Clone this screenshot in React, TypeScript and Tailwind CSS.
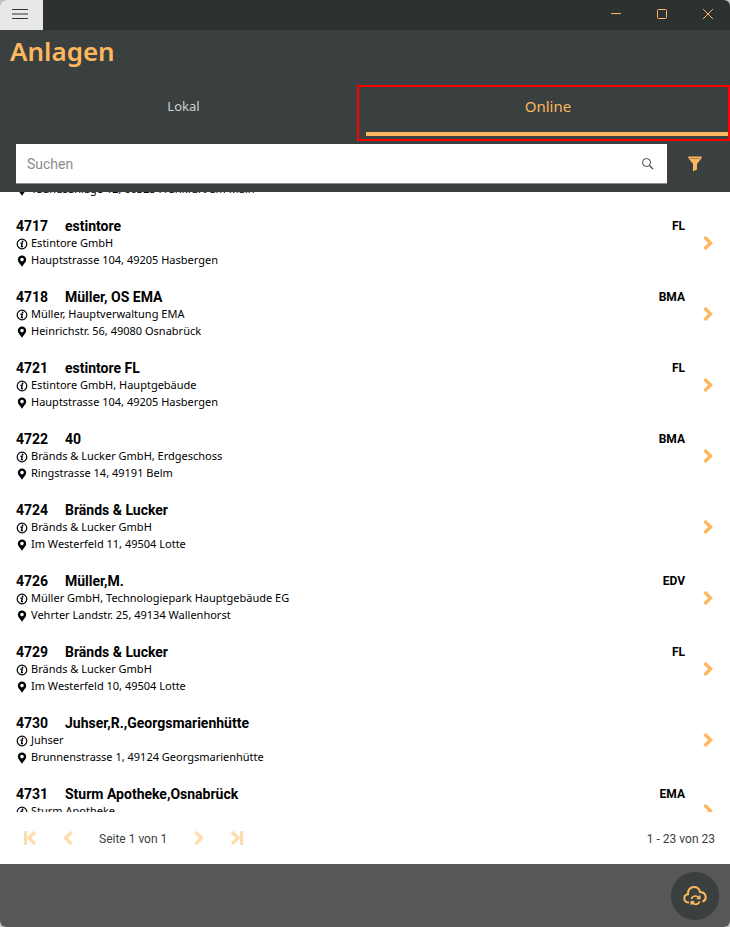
import React, { useLayoutEffect, useRef, useState } from 'react'

interface Site {
  id: string
  name: string
  info: string
  address: string
  type?: string
}

const sites: Site[] = [
  { id: '', name: '', info: '', address: 'Taunusanlage 12, 60325 Frankfurt am Main' },
  { id: '4717', name: 'estintore', info: 'Estintore GmbH', address: 'Hauptstrasse 104, 49205 Hasbergen', type: 'FL' },
  { id: '4718', name: 'Müller, OS EMA', info: 'Müller, Hauptverwaltung EMA', address: 'Heinrichstr. 56, 49080 Osnabrück', type: 'BMA' },
  { id: '4721', name: 'estintore FL', info: 'Estintore GmbH, Hauptgebäude', address: 'Hauptstrasse 104, 49205 Hasbergen', type: 'FL' },
  { id: '4722', name: '40', info: 'Bränds & Lucker GmbH, Erdgeschoss', address: 'Ringstrasse 14, 49191 Belm', type: 'BMA' },
  { id: '4724', name: 'Bränds & Lucker', info: 'Bränds & Lucker GmbH', address: 'Im Westerfeld 11, 49504 Lotte' },
  { id: '4726', name: 'Müller,M.', info: 'Müller GmbH, Technologiepark Hauptgebäude EG', address: 'Vehrter Landstr. 25, 49134 Wallenhorst', type: 'EDV' },
  { id: '4729', name: 'Bränds & Lucker', info: 'Bränds & Lucker GmbH', address: 'Im Westerfeld 10, 49504 Lotte', type: 'FL' },
  { id: '4730', name: 'Juhser,R.,Georgsmarienhütte', info: 'Juhser', address: 'Brunnenstrasse 1, 49124 Georgsmarienhütte' },
  { id: '4731', name: 'Sturm Apotheke,Osnabrück', info: 'Sturm Apotheke', address: '', type: 'EMA' },
]

const Chevron = ({ left = false }: { left?: boolean }) => (
  <svg width="16" height="16" viewBox="0 0 16 16" fill="none" stroke="currentColor" strokeWidth="3.4">
    <path d={left ? 'M11.500 2 5.500 8l6 6' : 'M4.500 2l6 6-6 6'} />
  </svg>
)

const ChevronEnd = ({ left = false }: { left?: boolean }) => (
  <svg width="16" height="16" viewBox="0 0 16 16" fill="none" stroke="currentColor" strokeWidth="3.4">
    <path d={left ? 'M13 2 7 8l6 6' : 'M3 2l6 6-6 6'} />
    <path d={left ? 'M3.500 1v14' : 'M12.500 1v14'} strokeWidth="3" />
  </svg>
)

const InfoIcon = () => (
  <svg width="12" height="12" viewBox="0 0 12 12" fill="none" stroke="currentColor" className="shrink-0">
    <circle cx="6" cy="6" r="4.8" strokeWidth="1.2" />
    <path d="M4.500 5.300h1.700L5.500 8.600h1.500" strokeWidth="1.4" />
    <circle cx="6.600" cy="3.500" r="0.9" fill="currentColor" stroke="none" />
  </svg>
)

const PinIcon = () => (
  <svg width="12" height="12" viewBox="0 0 12 12" fill="currentColor" className="shrink-0">
    <path
      fillRule="evenodd"
      d="M6 .5a4.200 4.200 0 0 0-4.200 4.200C1.800 7 4.300 8.800 6 11.700 7.700 8.800 10.200 7 10.200 4.700A4.200 4.200 0 0 0 6 .5Zm0 2.300a1.800 1.800 0 1 1 0 3.600 1.800 1.800 0 0 1 0-3.600Z"
    />
  </svg>
)

const TitleBar = () => (
  <div className="flex h-[30px] items-stretch justify-between bg-[#2c3131]">
    <button aria-label="Menü" className="flex w-[43px] items-center justify-center bg-[#e8e8e8] pr-1 pb-0.5">
      <svg width="16" height="12" viewBox="0 0 16 12" stroke="#333" strokeWidth="1">
        <path d="M0 1.500h16M0 6h16M0 10.500h16" />
      </svg>
    </button>
    <div className="flex text-[#fdb75e]">
      <button aria-label="Minimieren" className="flex w-[46px] items-center justify-center pb-0.5 pl-0.5">
        <svg width="10" height="10" viewBox="0 0 10 10" stroke="currentColor">
          <path d="M0 4.500h10" />
        </svg>
      </button>
      <button aria-label="Maximieren" className="flex w-[46px] items-center justify-center pb-0.5 pl-0.5">
        <svg width="10" height="10" viewBox="0 0 10 10" fill="none" stroke="currentColor">
          <rect x="0.5" y="0.5" width="9" height="9" rx="1" />
        </svg>
      </button>
      <button aria-label="Schließen" className="flex w-[46px] items-center justify-center pb-0.5 pl-0.5">
        <svg width="10" height="10" viewBox="0 0 10 10" stroke="currentColor">
          <path d="M0 0l10 10M10 0L0 10" />
        </svg>
      </button>
    </div>
  </div>
)

const SiteRow = ({ site }: { site: Site }) => (
  <li className="flex h-[71px] items-center pl-4 pr-3.5 text-black">
    <div className="min-w-0 flex-1">
      <div className="flex h-[19px] items-center justify-between font-['Roboto',sans-serif] font-bold">
        <h2 className="flex text-sm">
          <span className="w-[49px]">{site.id}</span>
          <span>{site.name}</span>
        </h2>
        <span className="mr-[15px] text-xs">{site.type}</span>
      </div>
      <p className="flex h-[17px] items-center gap-[3px] text-[11px]">
        <InfoIcon />
        {site.info}
      </p>
      <p className="flex h-[17px] items-center gap-[3px] text-[11px]">
        <PinIcon />
        {site.address}
      </p>
    </div>
    <button aria-label="Öffnen" className="text-[#fdb75e]">
      <Chevron />
    </button>
  </li>
)

const App: React.FC = () => {
  const [tab, setTab] = useState('online')
  const listRef = useRef<HTMLUListElement>(null)

  useLayoutEffect(() => {
    if (listRef.current) listRef.current.scrollTop = 56
  }, [])

  return (
    <div className="h-screen bg-[#c4c4c4]">
      <div className="flex h-full flex-col overflow-hidden rounded-md bg-white font-['Noto_Sans',sans-serif]">
        <TitleBar />

        <header className="bg-[#3a3f3f] pb-2">
          <h1 className="h-[55px] px-2.5 pt-[3px] text-[26px] leading-9 font-semibold text-[#fdb75e]">Anlagen</h1>

          <div role="tablist" className="grid grid-cols-2">
            <button
              role="tab"
              aria-selected={tab === 'lokal'}
              onClick={() => setTab('lokal')}
              className="flex h-14 justify-center pt-[11px] pl-0.5 text-[13px] leading-5 text-[#d0d2d2]"
            >
              Lokal
            </button>
            <button
              role="tab"
              aria-selected={tab === 'online'}
              onClick={() => setTab('online')}
              className="relative flex h-14 flex-col items-stretch pt-[11px] pl-px text-[15px] leading-5 text-[#fdb75e]"
            >
              Online
              <span className="mt-4 mr-0.5 h-1 bg-[#fdb75e]" />
              <span className="absolute inset-y-0 right-0 -left-2 border-2 border-[#ff0000]" />
            </button>
          </div>

          <div className="mt-[3px] flex items-center pl-4">
            <label className="flex h-10 flex-1 items-center border-b border-[#8a8d8d] bg-white pr-[13px] pl-[11px]">
              <input
                type="text"
                aria-label="Suchen"
                placeholder="Suchen"
                className="min-w-0 flex-1 font-['Roboto',sans-serif] text-sm outline-none placeholder:text-[#8c8c8c]"
              />
              <svg width="13" height="13" viewBox="0 0 13 13" fill="none" stroke="#444">
                <circle cx="5.5" cy="5.5" r="4" />
                <path d="M8.500 8.500l3.500 3.500" strokeWidth="1.200" />
              </svg>
            </label>
            <button aria-label="Filter" className="flex w-[63px] justify-center pr-2 text-[#fdb75e]">
              <svg width="14" height="16" viewBox="0 0 14 16" fill="currentColor">
                <path d="M.3.500h13.400v1.500L9 8v5.500L5 15.500V8L.3 2Z" />
                <path d="M2 2.500h10" stroke="#a87f4c" />
              </svg>
            </button>
          </div>
        </header>

        <ul ref={listRef} className="min-h-0 flex-1 overflow-y-auto [scrollbar-width:none]">
          {sites.map((site) => (
            <SiteRow key={site.id} site={site} />
          ))}
        </ul>

        <nav className="flex h-[52px] items-center justify-between pr-[15px] pl-[22px] font-['Roboto',sans-serif] text-xs text-[#3a3f3f]">
          <div className="flex items-center">
            <div className="flex gap-[22px] text-[#fddcb0]">
              <button aria-label="Erste Seite" disabled>
                <ChevronEnd left />
              </button>
              <button aria-label="Vorherige Seite" disabled>
                <Chevron left />
              </button>
            </div>
            <span className="mx-[23px] pt-0.5 pr-px">Seite 1 von 1</span>
            <div className="flex gap-[22px] text-[#fddcb0]">
              <button aria-label="Nächste Seite" disabled>
                <Chevron />
              </button>
              <button aria-label="Letzte Seite" disabled>
                <ChevronEnd />
              </button>
            </div>
          </div>
          <span className="pt-0.5">1 - 23 von 23</span>
        </nav>

        <footer className="flex h-[63px] items-center justify-end bg-[#575757] pr-[11px]">
          <button
            aria-label="Synchronisieren"
            className="flex size-12 items-center justify-center rounded-full bg-[#3a3f3f] text-[#fdb75e]"
          >
            <svg width="24" height="22" viewBox="0 0 24 22" fill="none" stroke="currentColor" strokeWidth="2">
              <path d="M6 17.500H5C2.500 17 1.300 15.500 1.300 13.200c0-2.200 1.500-3.800 3.700-4C4.500 5 7.500 2 11 2c3 0 5.300 1.800 6 5 3.200.2 5.700 2 5.700 5.300 0 2.200-1.200 3.800-3.200 4.400" />
              <path d="M8.300 14c.6-2 2.200-3 4.200-3 1.500 0 2.600.6 3.400 1.700M16.700 10.500v3h-3M16.700 16.300c-.6 2-2.200 3-4.200 3-1.500 0-2.600-.6-3.400-1.700M8.300 19.800v-3h3" strokeWidth="1.700" />
            </svg>
          </button>
        </footer>
      </div>
    </div>
  )
}

export default App
